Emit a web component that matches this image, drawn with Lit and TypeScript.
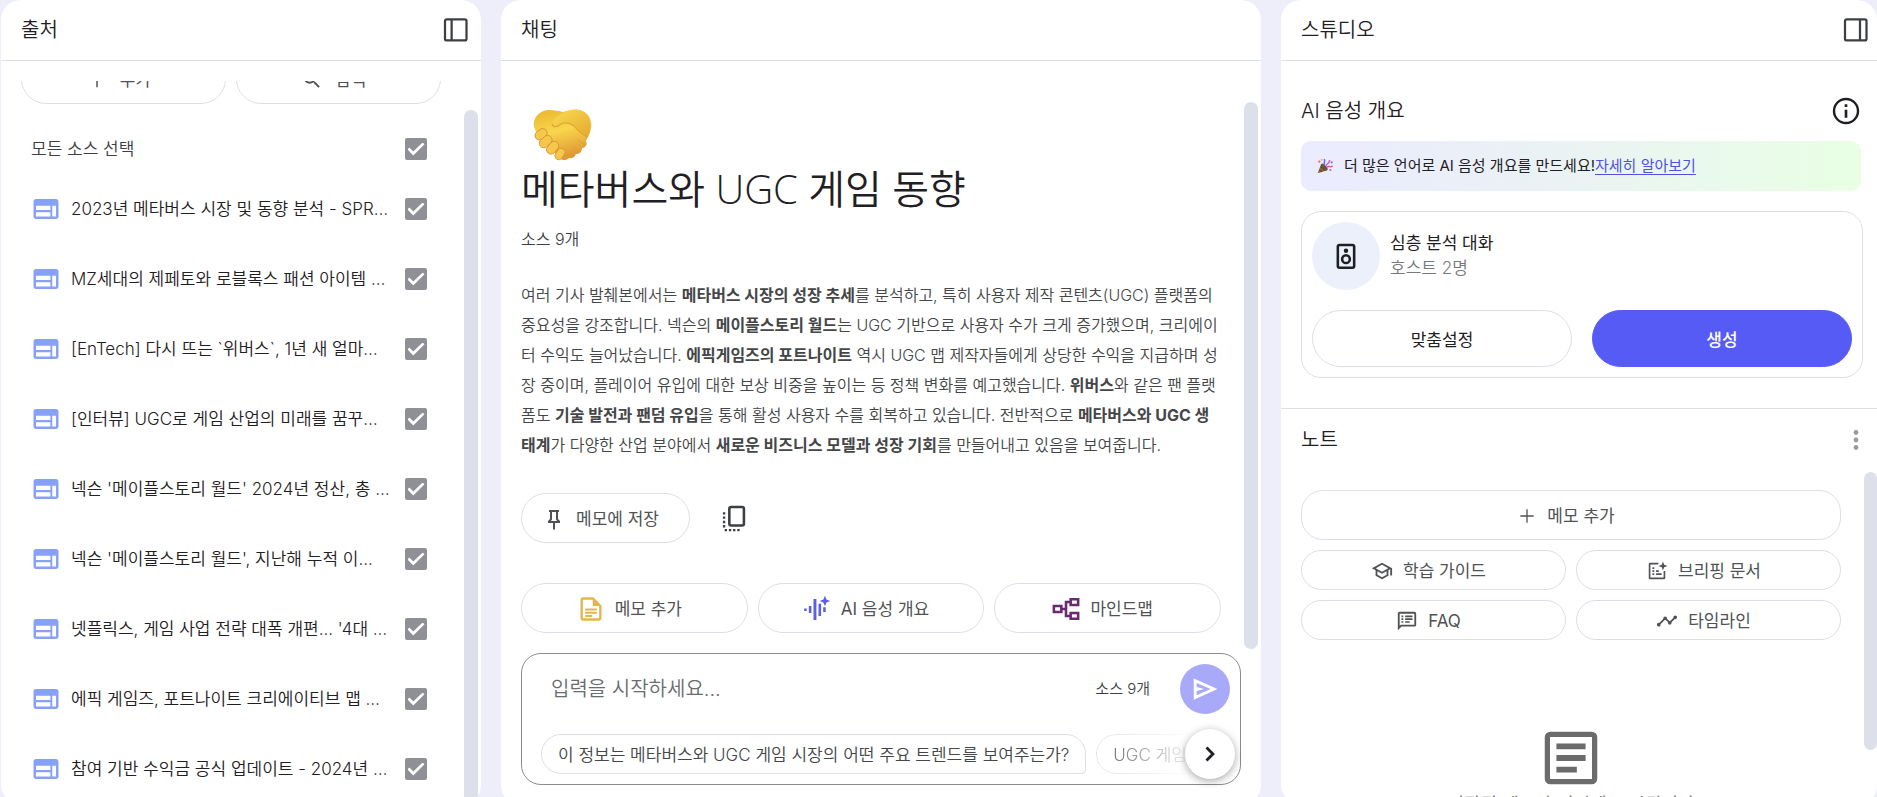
import { LitElement, html, svg, css } from "lit";
import { customElement, property } from "lit/decorators.js";

const shapes: Record<string, unknown> = {
  panelLeft: svg`<g fill="none" stroke="currentColor" stroke-width="1.800"><rect x="3.200" y="3.500" width="17.200" height="16.800" rx="1.400"/><path d="M8.500 4v16"/></g>`,
  panelRight: svg`<g fill="none" stroke="currentColor" stroke-width="1.800"><rect x="3.200" y="3.500" width="17.200" height="16.800" rx="1.400"/><path d="M15.200 4v16"/></g>`,
  plus: svg`<path d="M20 12.800h-7.200V20h-1.600v-7.200H4v-1.600h7.200V4h1.600v7.200H20z"/>`,
  search: svg`<path d="M15.500 14h-.8l-.3-.3A6.500 6.500 0 1 0 13.700 14.400l.3.3v.8l5 5 1.500-1.500zM9.500 14a4.500 4.500 0 1 1 0-9 4.500 4.500 0 0 1 0 9z"/>`,
  web: svg`<path d="M20 4H4c-1.100 0-1.990.9-1.990 2L2 18c0 1.100.9 2 2 2h16c1.100 0 2-.9 2-2V6c0-1.100-.9-2-2-2zm-4.500 14H4v-3.500h11.500V18zm0-5.200H4V9.400h11.500v3.400zM20 18h-3V9.400h3V18z"/>`,
  pin: svg`<path d="M16 12l2 2v2h-5v6l-1 1-1-1v-6H6v-2l2-2V5H7V3h10v2h-1zM8.850 14h6.300L14 12.850V5h-4v7.850z"/>`,
  copy: svg`<rect x="8" y="2.500" width="12.500" height="16" rx="1.500" fill="none" stroke="currentColor" stroke-width="2.200"/><path d="M2.500 7h2v2h-2zM2.500 10.700h2v2h-2zM2.500 14.400h2v2h-2zM2.500 18.100h2v2h-2zM4 21.400h2v2H4zM7.600 21.400h2v2h-2zM11.200 21.400h2v2h-2zM14.800 21.400h2v2h-2z"/>`,
  note: svg`<path d="M14 2H5a2 2 0 0 0-2 2v16a2 2 0 0 0 2 2h14a2 2 0 0 0 2-2V9zM5 20V4h8.500v5.500H19V20z"/><path d="M7 11.500h10v1.700H7zM7 14.300h10V16H7zM7 17.100h6v1.700H7z"/>`,
  audio: svg`<path d="M1 11.500h2.200v2.200H1zM5 9.500h2.200v6H5zM9 3.500h2.500v18H9zM13.300 7.500h2.200v10.500h-2.200zM17.300 10.500h2.200v4h-2.200zM18.800.6l1.300 3.200 3.200 1.300-3.200 1.300-1.300 3.200-1.300-3.200-3.200-1.300 3.200-1.300z"/>`,
  mindmap: svg`<path fill="none" stroke="currentColor" stroke-width="2.200" d="M1.600 9.500h6.400v5H1.600zM16 3.600h6.400v5H16zM16 15.400h6.400v5H16zM8 12h4M16 6h-4v12h4"/>`,
  send: svg`<path d="M3 20.500v-17L22 12zm2.300-3.600L16.500 12 5.300 7.100v3.300l6 1.600-6 1.600z"/>`,
  chevron: svg`<path fill="none" stroke="currentColor" stroke-width="2.400" d="M9 6.500l5.500 5.500-5.500 5.500"/>`,
  info: svg`<circle cx="12" cy="12" r="9" fill="none" stroke="currentColor" stroke-width="1.800"/><path d="M11 11h2v6h-2zM11 7h2v2h-2z"/>`,
  speaker: svg`<rect x="5" y="2.500" width="14" height="19.500" rx="1.500" fill="none" stroke="currentColor" stroke-width="2.200"/><circle cx="12" cy="7.500" r="1.900"/><circle cx="12" cy="14.700" r="3.300" fill="none" stroke="currentColor" stroke-width="2.200"/>`,
  more: svg`<circle cx="12" cy="4.500" r="2.400"/><circle cx="12" cy="12" r="2.400"/><circle cx="12" cy="19.500" r="2.400"/>`,
  school: svg`<path d="M12 3 1 9l4 2.180v6L12 21l7-3.820v-6l2-1.090V17h2V9L12 3zm6.820 6L12 12.720 5.180 9 12 5.280 18.820 9zM17 15.990l-5 2.730-5-2.730v-3.720L12 15l5-2.730v3.720z"/>`,
  briefing: svg`<path d="M14 3H4.500A1.500 1.500 0 0 0 3 4.500v15A1.500 1.500 0 0 0 4.500 21h15a1.500 1.500 0 0 0 1.500-1.500V12h-1.800v7.200H4.800V4.800H13zM7 8h2v1.800H7zM7 11.200h2V13H7zM7 14.500h2v1.800H7zM11 11.200h3V13h-3zM11 14.500h6v1.800h-6zM18.500 1.500l1.300 3.700L23.500 6.500l-3.700 1.300-1.300 3.700-1.300-3.700-3.700-1.300 3.700-1.300z"/>`,
  faq: svg`<path d="M20 2H4a2 2 0 0 0-2 2v18l4-4h14a2 2 0 0 0 2-2V4a2 2 0 0 0-2-2zm0 14H5.200L4 17.200V4h16zM6 6h2v1.800H6zM6 9.100h2v1.800H6zM6 12.200h2V14H6zM10 6h8v1.800h-8zM10 9.100h8v1.800h-8zM10 12.200h5V14h-5z"/>`,
  timeline: svg`<path d="M23 8c0 1.100-.9 2-2 2-.18 0-.35-.02-.51-.07l-3.560 3.550c.05.160.07.340.07.520 0 1.100-.9 2-2 2s-2-.9-2-2c0-.18.02-.36.07-.52l-2.550-2.550c-.16.05-.34.07-.52.07s-.36-.02-.52-.07l-4.550 4.560c.05.160.07.330.07.510 0 1.100-.9 2-2 2s-2-.9-2-2 .9-2 2-2c.18 0 .35.02.51.07l4.560-4.550C8.020 9.360 8 9.180 8 9c0-1.100.9-2 2-2s2 .9 2 2c0 .18-.02.36-.07.52l2.550 2.550c.16-.05.34-.07.52-.07s.36.02.52.07l3.550-3.560C19.020 8.350 19 8.180 19 8c0-1.100.9-2 2-2s2 .9 2 2z"/>`,
  article: svg`<rect x="3.900" y="3.900" width="16.200" height="16.200" rx="1" fill="none" stroke="currentColor" stroke-width="1.800"/><path d="M7 7h10v2H7zM7 11h10v2H7zM7 15h7v2H7z"/>`,
  party: svg`<path d="M1 23 6 9.500l9.500 9z" fill="#8a6a3c"/><path d="M3.500 18l4.500 2.500M5.500 13l7 6" stroke="#5a4636" stroke-width="1.800"/><ellipse cx="11" cy="13.500" rx="2.600" ry="6.500" transform="rotate(-45 11 13.500)" fill="#6d523c"/><path d="M11 11C10 7 12.500 5 11 1.500" fill="none" stroke="#5c7bea" stroke-width="2.400"/><path d="M13.500 12c1-5 5-2 5.500-9" fill="none" stroke="#d46ad0" stroke-width="2.400"/><path d="M14.500 14c3-3.500 5 1 9-2" fill="none" stroke="#e2607e" stroke-width="2.400"/><circle cx="3.500" cy="5.500" r="1.700" fill="#f06292"/><circle cx="7" cy="2.500" r="1.500" fill="#f4b740"/><circle cx="22" cy="6.500" r="1.600" fill="#5c7bea"/><circle cx="20" cy="18" r="1.600" fill="#a46be8"/>`,
};

@customElement("ui-icon")
export class UiIcon extends LitElement {
  static styles = css`
    :host { display: block; flex: none; width: 24px; height: 24px; }
    svg { display: block; width: 100%; height: 100%; fill: currentColor; }
  `;
  @property() name = "";
  render() {
    return html`<svg viewBox="0 0 24 24" aria-hidden="true">${shapes[this.name]}</svg>`;
  }
}

const sources = [
  "2023년 메타버스 시장 및 동향 분석 - SPRi 소프트웨어정책연구소",
  "MZ세대의 제페토와 로블록스 패션 아이템 구매 행동 연구",
  "[EnTech] 다시 뜨는 `위버스`, 1년 새 얼마나 성장했나",
  "[인터뷰] UGC로 게임 산업의 미래를 꿈꾸는 사람들",
  "넥슨 '메이플스토리 월드' 2024년 정산, 총 수익 공개",
  "넥슨 '메이플스토리 월드', 지난해 누적 이...",
  "넷플릭스, 게임 사업 전략 대폭 개편... '4대 축' 제시",
  "에픽 게임즈, 포트나이트 크리에이티브 맵 제작자 지원",
  "참여 기반 수익금 공식 업데이트 - 2024년 포트나이트",
];

@customElement("app-root")
export class AppRoot extends LitElement {
  static styles = css`
    :host {
      display: block;
      height: 100vh;
      overflow: hidden;
      background: #edeef9;
      color: #1f2023;
      font-family: Inter, "Noto Sans CJK KR", sans-serif;
      font-size: 17px;
      line-height: 24px;
    }
    * { box-sizing: border-box; }
    h1, h2, h3, p, ul { margin: 0; padding: 0; font-weight: inherit; }
    button, input { font: inherit; color: inherit; margin: 0; }
    button { cursor: pointer; background: none; border: 0; padding: 0; }

    .layout {
      display: grid;
      grid-template-columns: 480fr 760fr 596fr;
      gap: 20px;
      padding-left: 1px;
      height: calc(100vh + 8px);
    }
    .panel {
      position: relative;
      min-width: 0;
      min-height: 0;
      display: flex;
      flex-direction: column;
      background: #fff;
      border-radius: 20px;
      overflow: hidden;
    }
    .head {
      flex: none;
      display: flex;
      align-items: center;
      justify-content: space-between;
      height: 61px;
      padding: 0 10px 0 20px;
      border-bottom: 1px solid #dcdfe4;
    }
    .title { font-size: 20px; font-weight: 350; line-height: 28px; }
    .tool { color: #3c4043; }
    .tool ui-icon { width: 30px; height: 30px; }
    .thumb {
      position: absolute;
      right: 3px;
      width: 14px;
      border-radius: 7px;
      background: #dde0ea;
    }
    .pill {
      display: flex;
      align-items: center;
      justify-content: center;
      border: 1px solid #dcdfe8;
      border-radius: 25px;
      color: #505255;
      height: 50px;
      padding-top: 2px;
      white-space: nowrap;
    }

    /* sources */
    .sources-thumb { top: 110px; bottom: 0; }
    .scroller { flex: 1; min-height: 0; margin-top: 20px; overflow: hidden; }
    .scrolled { margin-top: -27px; }
    .add-row { display: grid; grid-template-columns: 1fr 1fr; gap: 10px; padding: 0 40px 0 20px; }
    .add-row .pill { gap: 12px; padding-right: 10px; }
    .add-row ui-icon { width: 22px; height: 22px; }
    .row {
      display: flex;
      align-items: center;
      height: 70px;
      padding: 0 54px 0 30px;
      font-weight: 350;
    }
    .row.all { height: 50px; margin-top: 20px; color: #3c4043; }
    .row ui-icon { width: 30px; height: 30px; margin-right: 10px; color: #86a1f7; }
    .row .name {
      flex: 1;
      min-width: 0;
      overflow: hidden;
      white-space: nowrap;
      text-overflow: ellipsis;
      margin-right: 14px;
    }
    .list { list-style: none; }
    .tick {
      appearance: none;
      flex: none;
      display: grid;
      place-items: center;
      width: 22px;
      height: 22px;
      border-radius: 2px;
      background: #8f9095;
    }
    .tick:checked::before {
      content: "";
      width: 17px;
      height: 13px;
      background: #fff;
      clip-path: polygon(0 53%, 11% 39%, 34% 69%, 89% 0, 100% 14%, 34% 100%);
    }

    /* chat */
    .chat-thumb { top: 102px; bottom: 156px; }
    .chat-body { flex: 1; min-height: 0; overflow: hidden; padding: 48px 40px 0 20px; }
    .emoji { display: block; width: 60px; height: 52px; margin-left: 11px; }
    .chat-title { font-family: "Open Sans", "Noto Sans CJK KR", sans-serif; font-size: 40px; line-height: 56px; font-weight: 350; }
    .count { font-size: 16px; font-weight: 350; margin-top: 10px; color: #3c4043; }
    .summary { margin-top: 29px; font-size: 16px; line-height: 30px; color: #444648; font-weight: 350; word-break: break-all; }
    .summary b { font-weight: 700; }
    .actions { display: flex; align-items: center; gap: 30px; margin-top: 33px; }
    .save { padding: 2px 30px 0 20px; gap: 10px; }
    .save ui-icon { width: 24px; height: 24px; }
    .copy { color: #3c4043; }
    .copy ui-icon { width: 28px; height: 28px; }
    .chips { display: grid; grid-template-columns: repeat(3, 1fr); gap: 10px; margin-top: 40px; }
    .chips .pill { gap: 10px; padding-right: 10px; }
    .chips ui-icon { width: 28px; height: 28px; }
    .gold { color: #e3b54c; }
    .blue { color: #5b5fe0; }
    .plum { color: #6b2a6e; }
    .composer {
      flex: none;
      position: relative;
      margin: 20px;
      height: 132px;
      padding: 10px 10px 10px 19px;
      border: 1px solid #8b8c8f;
      border-radius: 20px;
      display: flex;
      flex-direction: column;
      justify-content: space-between;
    }
    .entry { display: flex; align-items: center; gap: 30px; }
    .entry input {
      flex: 1;
      min-width: 0;
      border: 0;
      outline: 0;
      padding: 0 0 0 10px;
      height: 50px;
      background: none;
      font-size: 20px;
      font-weight: 350;
    }
    .entry input::placeholder { color: #6a6c6f; opacity: 1; }
    .entry-count { font-size: 15px; font-weight: 350; color: #3c4043; }
    .send {
      display: grid;
      place-items: center;
      width: 50px;
      height: 50px;
      border-radius: 50%;
      background: #a9a9f9;
      color: #fff;
    }
    .send ui-icon { width: 30px; height: 30px; }
    .suggest { display: flex; gap: 10px; overflow: hidden; }
    .suggest .pill { flex: none; height: 40px; padding: 2px 16px 0; border-radius: 20px 20px 4px 20px; color: #444648; font-weight: 350; }
    .suggest .fade { min-width: 140px; justify-content: flex-start; mask-image: linear-gradient(90deg, rgba(0,0,0,0.9) 0, transparent 100px); }
    .next {
      position: absolute;
      right: 5px;
      bottom: 5px;
      width: 50px;
      height: 50px;
      display: grid;
      place-items: center;
      border-radius: 50%;
      background: #fff;
      box-shadow: 0 2px 8px rgba(0, 0, 0, 0.35);
    }
    .next ui-icon { width: 28px; height: 28px; }

    /* studio */
    .studio .head { padding-right: 6px; }
    .audio { flex: none; padding: 30px 14px 30px 20px; border-bottom: 1px solid #dcdfe4; }
    .audio-head { display: flex; align-items: center; justify-content: space-between; height: 40px; padding-right: 1px; }
    .audio-head ui-icon { width: 32px; height: 32px; }
    .banner {
      display: flex;
      align-items: center;
      height: 50px;
      margin: 10px 2px 0 0;
      padding-left: 16px;
      border-radius: 10px;
      background: linear-gradient(90deg, #ebebff, #eaf2f4 45%, #e9ffe4);
      font-size: 15px;
      white-space: nowrap;
    }
    .banner ui-icon { width: 16px; height: 16px; margin-right: 11px; }
    .banner a { color: #4f52e0; text-decoration: underline; text-underline-offset: 3px; }
    .card { margin-top: 20px; padding: 10px; border: 1px solid #dcdfe4; border-radius: 20px; }
    .deep { display: flex; align-items: center; gap: 10px; }
    .disc { display: grid; place-items: center; width: 68px; height: 68px; border-radius: 50%; background: #ecf0fb; }
    .disc ui-icon { width: 28px; height: 28px; }
    .deep-text { line-height: 25px; }
    .host { color: #77797c; font-weight: 350; }
    .card-actions { display: grid; grid-template-columns: 1fr 1fr; gap: 20px; margin-top: 20px; }
    .card-actions .pill { height: 57px; border-radius: 29px; color: #1f2023; }
    .card-actions .primary { background: #575bf5; border-color: #575bf5; color: #fff; font-weight: 500; }
    .notes-head { flex: none; display: flex; align-items: center; justify-content: space-between; height: 61px; padding: 0 9px 0 20px; }
    .notes-head ui-icon { color: #9a9b9e; }
    .notes { flex: 1; min-height: 0; overflow: hidden; padding: 20px 36px 0 20px; }
    .note-grid { display: grid; grid-template-columns: 1fr 1fr; gap: 10px; }
    .note-grid .pill { height: 40px; border-radius: 20px; gap: 10px; padding-right: 10px; }
    .note-grid ui-icon { width: 22px; height: 22px; }
    .note-grid .wide { grid-column: 1 / -1; height: 50px; border-radius: 22px; }
    .wide ui-icon { width: 20px; height: 20px; }
    .notes-thumb { top: 472px; bottom: 55px; right: 0; width: 13px; }
    .empty { display: flex; flex-direction: column; align-items: center; margin-top: 83px; color: #6b6b6b; font-size: 18px; line-height: 24px; }
    .empty ui-icon { width: 70px; height: 70px; }
  `;

  private row(name: string, i: number) {
    return html`<li class="row">
      <ui-icon name="web"></ui-icon>
      <label class="name" for="src-${i}">${name}</label>
      <input class="tick" type="checkbox" id="src-${i}" .checked=${true} />
    </li>`;
  }

  private handshake() {
    return svg`<svg class="emoji" viewBox="0 0 60 52" role="img" aria-label="악수">
      <defs>
        <linearGradient id="skin" x1="0" y1="0" x2="0.3" y2="1"><stop offset="0" stop-color="#e9b52c"/><stop offset="0.5" stop-color="#f9d64c"/><stop offset="1" stop-color="#e09a35"/></linearGradient>
        <linearGradient id="arm" x1="0" y1="0" x2="1" y2="1"><stop offset="0" stop-color="#fadc52"/><stop offset="1" stop-color="#e5a92f"/></linearGradient>
      </defs>
      <path d="M2 18C0 8 9 1 17 1c5 0 10 1 14 2 6-2 15-4 21 0 8 4 9 14 5 23l-3 6c2 4-1 7-4 7 0 4-3 6-6 6-1 3-4 5-7 4-3 3-7 2-8 1L6 28z" fill="url(#skin)"/>
      <path d="M31 4c7-4 17-5 22 0 7 5 7 15 3 23-6-1-10-6-14-10-4-3-9-4-13-2-3 3-9 3-8-1 1-5 6-7 10-10z" fill="url(#arm)"/>
      <path d="M20 15c1 4 6 3 9 0 4-2 9-1 13 2 4 5 9 9 14 11" fill="none" stroke="#d39a2a" stroke-width="1.200" opacity="0.7"/>
      <g fill="#f5c74b" stroke="#d6963a" stroke-width="0.900">
        <rect x="3" y="21" width="13" height="9" rx="4.500" transform="rotate(-38 9 26)"/>
        <rect x="7" y="28" width="14" height="9" rx="4.500" transform="rotate(-42 14 33)"/>
        <rect x="14" y="34" width="14" height="9" rx="4.500" transform="rotate(-50 21 39)"/>
        <rect x="22" y="41" width="12" height="8" rx="4" transform="rotate(-58 28 45)"/>
      </g>
      <path d="M46 31l7 5M42 38l6 5" stroke="#dba13a" stroke-width="1" fill="none" stroke-linecap="round"/>
    </svg>`;
  }

  render() {
    return html`<main class="layout">
      <section class="panel">
        <header class="head">
          <h2 class="title">출처</h2>
          <button class="tool" aria-label="출처 패널 접기"><ui-icon name="panelLeft"></ui-icon></button>
        </header>
        <div class="scroller">
          <div class="scrolled">
            <div class="add-row">
              <button class="pill"><ui-icon name="plus"></ui-icon>추가</button>
              <button class="pill"><ui-icon name="search"></ui-icon>검색</button>
            </div>
            <div class="row all">
              <label class="name" for="src-all">모든 소스 선택</label>
              <input class="tick" type="checkbox" id="src-all" .checked=${true} />
            </div>
            <ul class="list">${sources.map((s, i) => this.row(s, i))}</ul>
          </div>
        </div>
        <div class="thumb sources-thumb"></div>
      </section>

      <section class="panel">
        <header class="head"><h2 class="title">채팅</h2></header>
        <div class="chat-body">
          ${this.handshake()}
          <h1 class="chat-title">메타버스와 UGC 게임 동향</h1>
          <p class="count">소스 9개</p>
          <p class="summary">여러 기사 발췌본에서는 <b>메타버스 시장의 성장 추세</b>를 분석하고, 특히 사용자 제작 콘텐츠(UGC) 플랫폼의 중요성을 강조합니다. 넥슨의 <b>메이플스토리 월드</b>는 UGC 기반으로 사용자 수가 크게 증가했으며, 크리에이터 수익도 늘어났습니다. <b>에픽게임즈의 포트나이트</b> 역시 UGC 맵 제작자들에게 상당한 수익을 지급하며 성장 중이며, 플레이어 유입에 대한 보상 비중을 높이는 등 정책 변화를 예고했습니다. <b>위버스</b>와 같은 팬 플랫폼도 <b>기술 발전과 팬덤 유입</b>을 통해 활성 사용자 수를 회복하고 있습니다. 전반적으로 <b>메타버스와 UGC 생태계</b>가 다양한 산업 분야에서 <b>새로운 비즈니스 모델과 성장 기회</b>를 만들어내고 있음을 보여줍니다.</p>
          <div class="actions">
            <button class="pill save"><ui-icon name="pin"></ui-icon>메모에 저장</button>
            <button class="copy" aria-label="복사"><ui-icon name="copy"></ui-icon></button>
          </div>
          <div class="chips">
            <button class="pill"><ui-icon class="gold" name="note"></ui-icon>메모 추가</button>
            <button class="pill"><ui-icon class="blue" name="audio"></ui-icon>AI 음성 개요</button>
            <button class="pill"><ui-icon class="plum" name="mindmap"></ui-icon>마인드맵</button>
          </div>
        </div>
        <form class="composer" @submit=${(e: Event) => e.preventDefault()}>
          <div class="entry">
            <input type="text" aria-label="질문 입력" placeholder="입력을 시작하세요..." />
            <span class="entry-count">소스 9개</span>
            <button class="send" aria-label="보내기"><ui-icon name="send"></ui-icon></button>
          </div>
          <div class="suggest">
            <button class="pill" type="button">이 정보는 메타버스와 UGC 게임 시장의 어떤 주요 트렌드를 보여주는가?</button>
            <button class="pill fade" type="button">UGC 게임</button>
          </div>
          <button class="next" type="button" aria-label="다음"><ui-icon name="chevron"></ui-icon></button>
        </form>
        <div class="thumb chat-thumb"></div>
      </section>

      <section class="panel studio">
        <header class="head">
          <h2 class="title">스튜디오</h2>
          <button class="tool" aria-label="스튜디오 패널 접기"><ui-icon name="panelRight"></ui-icon></button>
        </header>
        <div class="audio">
          <div class="audio-head">
            <h3 class="title">AI 음성 개요</h3>
            <button aria-label="정보"><ui-icon name="info"></ui-icon></button>
          </div>
          <p class="banner"><ui-icon name="party"></ui-icon><span>더 많은 언어로 AI 음성 개요를 만드세요!<a href="#">자세히 알아보기</a></span></p>
          <div class="card">
            <div class="deep">
              <div class="disc"><ui-icon name="speaker"></ui-icon></div>
              <div class="deep-text"><p>심층 분석 대화</p><p class="host">호스트 2명</p></div>
            </div>
            <div class="card-actions">
              <button class="pill">맞춤설정</button>
              <button class="pill primary">생성</button>
            </div>
          </div>
        </div>
        <div class="notes-head">
          <h3 class="title">노트</h3>
          <button aria-label="더보기"><ui-icon name="more"></ui-icon></button>
        </div>
        <div class="notes">
          <div class="note-grid">
            <button class="pill wide"><ui-icon name="plus"></ui-icon>메모 추가</button>
            <button class="pill"><ui-icon name="school"></ui-icon>학습 가이드</button>
            <button class="pill"><ui-icon name="briefing"></ui-icon>브리핑 문서</button>
            <button class="pill"><ui-icon name="faq"></ui-icon>FAQ</button>
            <button class="pill"><ui-icon name="timeline"></ui-icon>타임라인</button>
          </div>
          <div class="empty"><ui-icon name="article"></ui-icon><p>저장된 메모가 여기에 표시됩니다</p></div>
        </div>
        <div class="thumb notes-thumb"></div>
      </section>
    </main>`;
  }
}
